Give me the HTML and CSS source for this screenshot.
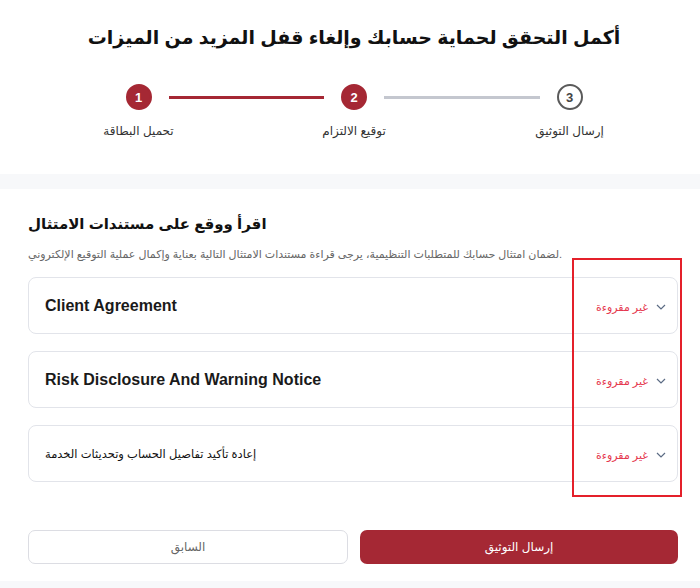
FILE: index.html
```html
<!DOCTYPE html>
<html lang="ar">
<head>
  <meta charset="UTF-8" />
  <title>التحقق من الحساب</title>
  <meta name="viewport" content="width=device-width, initial-scale=1" />
  <link rel="stylesheet" href="styles.css">
</head>
<body>

  <header class="top">
    <h1>أكمل التحقق لحماية حسابك وإلغاء قفل المزيد من الميزات</h1>

    <div class="stepper">
      <div class="dots">
        <span class="dot done">1</span>
        <span class="bar done"></span>
        <span class="dot done">2</span>
        <span class="bar"></span>
        <span class="dot">3</span>
      </div>
      <div class="labels">
        <span>تحميل البطاقة</span>
        <span>توقيع الالتزام</span>
        <span>إرسال التوثيق</span>
      </div>
    </div>
  </header>

  <main class="docs">
    <h2>اقرأ ووقع على مستندات الامتثال</h2>
    <p class="intro">لضمان امتثال حسابك للمتطلبات التنظيمية، يرجى قراءة مستندات الامتثال التالية بعناية وإكمال عملية التوقيع الإلكتروني.</p>

    <div class="doc-list">
      <div class="doc">
        <span class="doc-title">Client Agreement</span>
        <span class="doc-state">غير مقروءة
          <svg width="10" height="6" viewBox="0 0 10 6"><path d="M1 1l4 4 4-4" fill="none" stroke="#5b6b84" stroke-width="1.2"/></svg>
        </span>
      </div>
      <div class="doc">
        <span class="doc-title">Risk Disclosure And Warning Notice</span>
        <span class="doc-state">غير مقروءة
          <svg width="10" height="6" viewBox="0 0 10 6"><path d="M1 1l4 4 4-4" fill="none" stroke="#5b6b84" stroke-width="1.2"/></svg>
        </span>
      </div>
      <div class="doc">
        <span class="doc-title ar">إعادة تأكيد تفاصيل الحساب وتحديثات الخدمة</span>
        <span class="doc-state">غير مقروءة
          <svg width="10" height="6" viewBox="0 0 10 6"><path d="M1 1l4 4 4-4" fill="none" stroke="#5b6b84" stroke-width="1.2"/></svg>
        </span>
      </div>
    </div>

    <div class="actions">
      <button class="btn ghost" type="button">السابق</button>
      <button class="btn primary" type="button">إرسال التوثيق</button>
    </div>

    <div class="mark"></div>
  </main>

</body>
</html>
```

FILE: styles.css
```css
* { box-sizing: border-box; }
html, body {
  margin: 0; padding: 0;
  background: #f7f8fa;
  font-family: 'Liberation Sans', 'DejaVu Sans', sans-serif;
  color: #1d1d1f;
  direction: ltr;
}
.top {
  background: #fff;
  height: 174px;
  padding: 20px 0 0 8px;
}
h1 {
  margin: 0;
  text-align: center;
  font-size: 19px; line-height: 36px;
  font-weight: bold; color: #111;
}
.stepper {
  width: 457px;
  margin: 28px auto 0;
}
.dots { display: flex; align-items: center; }
.dot {
  width: 26px; height: 26px;
  border-radius: 50%;
  border: 2px solid #5a5a5a;
  background: #fff;
  color: #444;
  font-size: 13px; font-weight: bold;
  display: flex; align-items: center; justify-content: center;
}
.dot.done { background: #a52834; border-color: #a52834; color: #fff; }
.bar {
  flex: 1; height: 3px;
  margin: 0 17px;
  background: #c4c7cf;
}
.bar.done { background: #a52834; }
.labels {
  display: flex; justify-content: space-between;
  margin: 12px -37px 0;
}
.labels span {
  width: 100px; text-align: center;
  font-size: 12px; line-height: 18px; color: #333;
}
.docs {
  position: relative;
  background: #fff;
  margin-top: 15px;
  padding: 24px 22px 17px 28px;
}
h2 {
  margin: 0;
  font-size: 15px; line-height: 22px;
  font-weight: bold; color: #111;
}
.intro {
  margin: 10px 0 0;
  font-size: 11px; line-height: 18px;
  color: #666;
}
.doc-list {
  display: flex; flex-direction: column;
  gap: 17px;
  margin-top: 14px;
}
.doc {
  height: 57px;
  border: 1px solid #e2e4ea;
  border-radius: 8px;
  padding: 0 11px 0 16px;
  display: flex; align-items: center; justify-content: space-between;
}
.doc-title { font-size: 16px; font-weight: bold; color: #1a1a1a; }
.doc-title.ar { font-size: 11.5px; font-weight: normal; color: #111; }
.doc-state {
  display: flex; align-items: center; gap: 8px;
  margin-top: 3px;
  font-size: 11px; color: #e5374d;
}
.actions {
  display: flex; gap: 12px;
  margin-top: 48px;
}
.btn {
  flex: 1; height: 34px;
  border-radius: 7px;
  font-family: inherit; font-size: 12px;
  cursor: pointer;
}
.btn.ghost { background: #fff; border: 1px solid #dcdde3; color: #666; }
.btn.primary { background: #a52834; border: none; color: #fff; }
.mark {
  position: absolute;
  left: 572px; top: 69px;
  width: 110px; height: 239px;
  border: 2px solid #e4202a;
}
```
